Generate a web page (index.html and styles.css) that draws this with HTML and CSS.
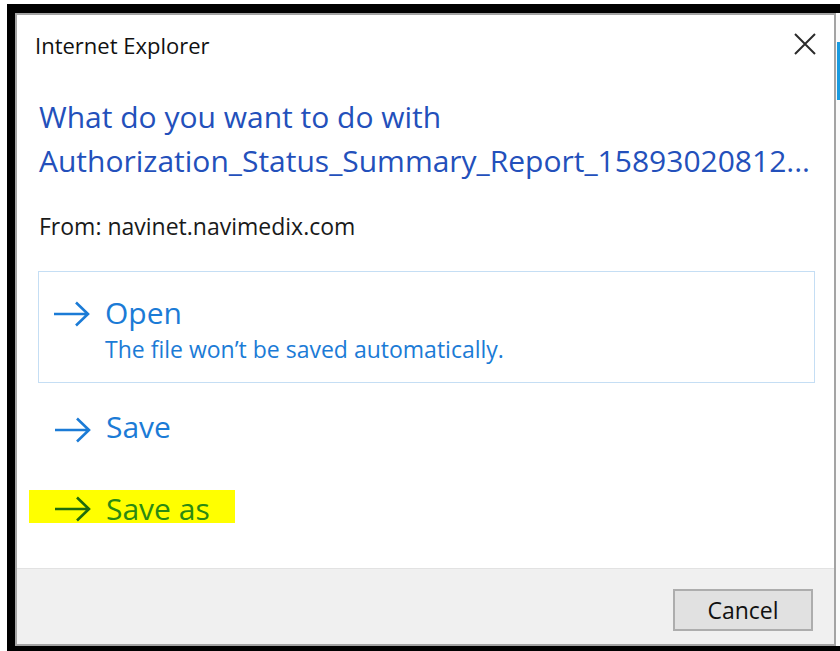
FILE: index.html
```html
<!DOCTYPE html>
<html lang="en">
<head>
<meta charset="utf-8">
<title>Internet Explorer</title>
<link rel="stylesheet" href="styles.css">
</head>
<body>
<div class="frame">
  <div class="dialog">
    <div class="dialog-body">
      <div class="titlebar">
        <span class="title">Internet Explorer</span>
        <button class="close" aria-label="Close">
          <svg width="22" height="22" viewBox="0 0 22 22"><path d="M1 1 L21 21 M21 1 L1 21" stroke="#2b2b2b" stroke-width="2" fill="none"/></svg>
        </button>
      </div>
      <h1 class="heading">What do you want to do with<br>Authorization_Status_Summary_Report_15893020812...</h1>
      <p class="source">From: navinet.navimedix.com</p>

      <div class="command command-boxed">
        <svg class="arrow" width="36" height="26" viewBox="0 0 36 26"><path d="M0 13 H34 M22 1.5 L34 13 L22 24.5" stroke="currentColor" stroke-width="2.6" fill="none"/></svg>
        <div class="command-text">
          <div class="command-title">Open</div>
          <div class="command-note">The file won’t be saved automatically.</div>
        </div>
      </div>

      <div class="command command-plain">
        <svg class="arrow" width="36" height="26" viewBox="0 0 36 26"><path d="M0 13 H34 M22 1.5 L34 13 L22 24.5" stroke="currentColor" stroke-width="2.6" fill="none"/></svg>
        <div class="command-text">
          <div class="command-title">Save</div>
        </div>
      </div>

      <div class="command command-marked">
        <svg class="arrow" width="36" height="26" viewBox="0 0 36 26"><path d="M0 13 H34 M22 1.5 L34 13 L22 24.5" stroke="currentColor" stroke-width="2.6" fill="none"/></svg>
        <div class="command-text">
          <div class="command-title">Save as</div>
        </div>
      </div>
    </div>
    <div class="footer">
      <button class="btn">Cancel</button>
    </div>
  </div>
  <div class="backdrop">
    <div class="backdrop-accent"></div>
  </div>
</div>
</body>
</html>
```

FILE: styles.css
```css
html, body {
  margin: 0;
  padding: 0;
  background: #ffffff;
  overflow: hidden;
}

body {
  width: 840px;
  height: 651px;
  font-family: "Open Sans", "Noto Sans", sans-serif;
}

/* black screenshot frame around the dialog */
.frame {
  display: flex;
  margin: 4px 0 0 7px;
  border-style: solid;
  border-color: #000;
  border-width: 9px 0 9px 8px;
  height: 633px;
  width: 825px;
}

.dialog {
  box-sizing: border-box;
  flex: none;
  width: 821px;
  height: 633px;
  border: 2px solid #a3a3a3;
  background: #fff;
  display: flex;
  flex-direction: column;
}

.dialog-body {
  flex: 1;
  padding: 0 0 0 22px;
}

.titlebar {
  display: flex;
  justify-content: space-between;
  align-items: flex-start;
  padding-top: 15px;
  margin-left: -4px;
}

.title {
  font-size: 22px;
  line-height: 30px;
  color: #111;
}

.close {
  margin: 3px 18px 0 0;
  padding: 0;
  border: 0;
  background: none;
  width: 22px;
  height: 22px;
  display: block;
}

.close svg { display: block; }

.heading {
  margin: 35px 0 0 0;
  font-weight: 400;
  font-size: 30px;
  line-height: 44px;
  color: #2350bb;
  white-space: nowrap;
}

.source {
  margin: 29px 0 0 0;
  font-size: 23px;
  line-height: 28px;
  color: #1a1a1a;
}

.command {
  display: flex;
  align-items: flex-start;
  color: #1b7bd6;
  margin-left: 16px;
}

.arrow {
  flex: none;
  margin-top: 8px;
  margin-right: 15px;
}

.command-boxed {
  margin: 31px 19px 0 -1px;
  border: 1px solid #c5def4;
  padding: 23px 0 19px 15px;
}

.command-boxed .arrow {
  margin-top: 6px;
}

.command-title {
  font-size: 30px;
  line-height: 36px;
}

.command-note {
  margin-top: 4px;
  font-size: 23px;
  line-height: 28px;
}

.command-plain {
  margin-top: 26px;
}

/* yellow marker over the last choice */
.command-marked {
  box-sizing: border-box;
  width: fit-content;
  margin-left: -10px;
  margin-top: 45px;
  height: 33px;
  padding: 4px 25px 0 26px;
  background: #ffff00;
  color: #2b8a12;
}

.command-marked .arrow {
  margin-top: 2px;
  color: #1f6c0c;
}

.command-marked .command-title {
  line-height: 30px;
}

.footer {
  flex: none;
  box-sizing: border-box;
  height: 76px;
  border-top: 1px solid #e2e2e2;
  background: #f0f0f0;
  display: flex;
  justify-content: flex-end;
  align-items: flex-start;
  padding: 20px 21px 0 0;
}

.btn {
  width: 140px;
  height: 42px;
  border: 2px solid #adadad;
  background: #e1e1e1;
  font-family: inherit;
  font-size: 23px;
  color: #111;
  padding: 0;
}

/* window behind the dialog */
.backdrop {
  flex: none;
  width: 4px;
  padding-top: 29px;
  background: #fafafa;
}

.backdrop-accent {
  width: 3px;
  margin-left: 1px;
  height: 58px;
  background: #1a9be0;
}
```
